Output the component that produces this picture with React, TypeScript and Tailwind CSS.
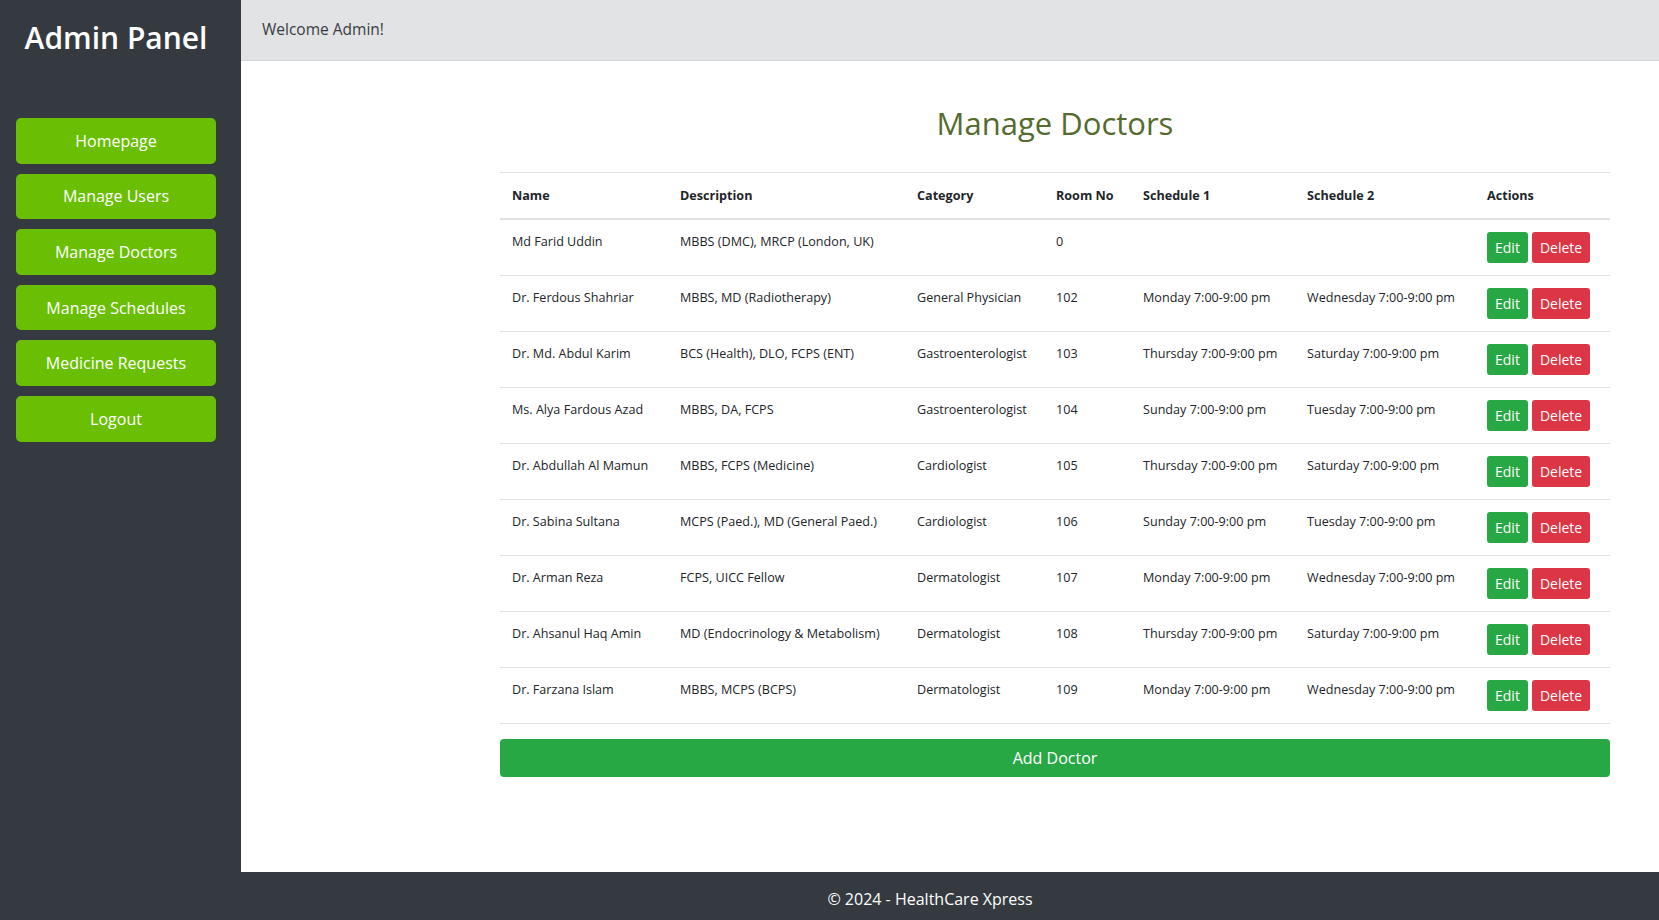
import React from "react";

interface Doctor_I {
  name: string;
  description: string;
  category: string;
  room: string;
  schedule1: string;
  schedule2: string;
}

const doctors: Doctor_I[] = [
  { name: "Md Farid Uddin", description: "MBBS (DMC), MRCP (London, UK)", category: "", room: "0", schedule1: "", schedule2: "" },
  { name: "Dr. Ferdous Shahriar", description: "MBBS, MD (Radiotherapy)", category: "General Physician", room: "102", schedule1: "Monday 7:00-9:00 pm", schedule2: "Wednesday 7:00-9:00 pm" },
  { name: "Dr. Md. Abdul Karim", description: "BCS (Health), DLO, FCPS (ENT)", category: "Gastroenterologist", room: "103", schedule1: "Thursday 7:00-9:00 pm", schedule2: "Saturday 7:00-9:00 pm" },
  { name: "Ms. Alya Fardous Azad", description: "MBBS, DA, FCPS", category: "Gastroenterologist", room: "104", schedule1: "Sunday 7:00-9:00 pm", schedule2: "Tuesday 7:00-9:00 pm" },
  { name: "Dr. Abdullah Al Mamun", description: "MBBS, FCPS (Medicine)", category: "Cardiologist", room: "105", schedule1: "Thursday 7:00-9:00 pm", schedule2: "Saturday 7:00-9:00 pm" },
  { name: "Dr. Sabina Sultana", description: "MCPS (Paed.), MD (General Paed.)", category: "Cardiologist", room: "106", schedule1: "Sunday 7:00-9:00 pm", schedule2: "Tuesday 7:00-9:00 pm" },
  { name: "Dr. Arman Reza", description: "FCPS, UICC Fellow", category: "Dermatologist", room: "107", schedule1: "Monday 7:00-9:00 pm", schedule2: "Wednesday 7:00-9:00 pm" },
  { name: "Dr. Ahsanul Haq Amin", description: "MD (Endocrinology & Metabolism)", category: "Dermatologist", room: "108", schedule1: "Thursday 7:00-9:00 pm", schedule2: "Saturday 7:00-9:00 pm" },
  { name: "Dr. Farzana Islam", description: "MBBS, MCPS (BCPS)", category: "Dermatologist", room: "109", schedule1: "Monday 7:00-9:00 pm", schedule2: "Wednesday 7:00-9:00 pm" },
];

const menu = ["Homepage", "Manage Users", "Manage Doctors", "Manage Schedules", "Medicine Requests", "Logout"];

export default function App() {
  return (
    <div className="w-full min-h-[920px] flex flex-col font-['Open_Sans',sans-serif] text-[#212529]">
      <div className="w-full h-[872px] flex flex-row">
        {/* sidebar */}
        <div className="w-[241px] shrink-0 bg-[#343a40] pl-[16px]">
          <div className="w-[200px] flex flex-col">
            <h1 className="h-[74px] flex items-center justify-center text-white text-[30px] font-semibold">
              Admin Panel
            </h1>
            <div className="mt-[44px] flex flex-col gap-[10px]">
              {menu.map((item, index) => (
                <button
                  key={index}
                  className="w-full h-[45.6px] rounded-[5px] bg-[#6abf04] text-white text-[16px]"
                >
                  {item}
                </button>
              ))}
            </div>
          </div>
        </div>

        {/* main */}
        <div className="flex-1 flex flex-col bg-white">
          <div className="h-[61px] bg-[#e2e3e5] border-b border-[#d3d5d8] flex items-center pl-[21px] text-[15.5px] text-[#383d41]">
            Welcome Admin!
          </div>
          <div className="ml-[259px] mr-[49px] flex flex-col">
            <h2 className="mt-[43px] h-[38px] leading-[38px] text-center text-[31px] font-medium text-[#556b2f]">
              Manage Doctors
            </h2>
            <table className="mt-[30px] w-[1110px] table-fixed border-collapse text-[12.6px]">
              <colgroup>
                <col className="w-[168px]" />
                <col className="w-[237px]" />
                <col className="w-[139px]" />
                <col className="w-[87px]" />
                <col className="w-[164px]" />
                <col className="w-[180px]" />
                <col className="w-[135px]" />
              </colgroup>
              <thead>
                <tr className="border-t border-[#dee2e6] border-b-2">
                  {["Name", "Description", "Category", "Room No", "Schedule 1", "Schedule 2", "Actions"].map((h, i) => (
                    <th key={i} className="p-[12px] h-[46px] text-left font-bold leading-[21px] whitespace-nowrap">
                      {h}
                    </th>
                  ))}
                </tr>
              </thead>
              <tbody>
                {doctors.map((doc, index) => (
                  <tr key={index} className="border-b border-[#dee2e6] align-top">
                    <td className="p-[12px] leading-[20px] whitespace-nowrap">{doc.name}</td>
                    <td className="p-[12px] leading-[20px] whitespace-nowrap">{doc.description}</td>
                    <td className="p-[12px] leading-[20px] whitespace-nowrap">{doc.category}</td>
                    <td className="p-[12px] leading-[20px] whitespace-nowrap">{doc.room}</td>
                    <td className="p-[12px] leading-[20px] whitespace-nowrap">{doc.schedule1}</td>
                    <td className="p-[12px] leading-[20px] whitespace-nowrap">{doc.schedule2}</td>
                    <td className="p-[12px] whitespace-nowrap">
                      <div className="flex flex-row gap-[4px]">
                        <button className="h-[31px] px-[8px] rounded-[3px] bg-[#28a745] text-white text-[14px]">Edit</button>
                        <button className="h-[31px] px-[8px] rounded-[3px] bg-[#dc3545] text-white text-[14px]">Delete</button>
                      </div>
                    </td>
                  </tr>
                ))}
              </tbody>
            </table>
            <button className="mt-[15px] w-full h-[38px] rounded-[4px] bg-[#28a745] text-white text-[16px]">
              Add Doctor
            </button>
          </div>
        </div>
      </div>

      <div className="w-full h-[48px] bg-[#343a40] flex items-center justify-center pl-[201px] pt-[6px] text-white text-[16px]">
        © 2024 - HealthCare Xpress
      </div>
    </div>
  );
}
